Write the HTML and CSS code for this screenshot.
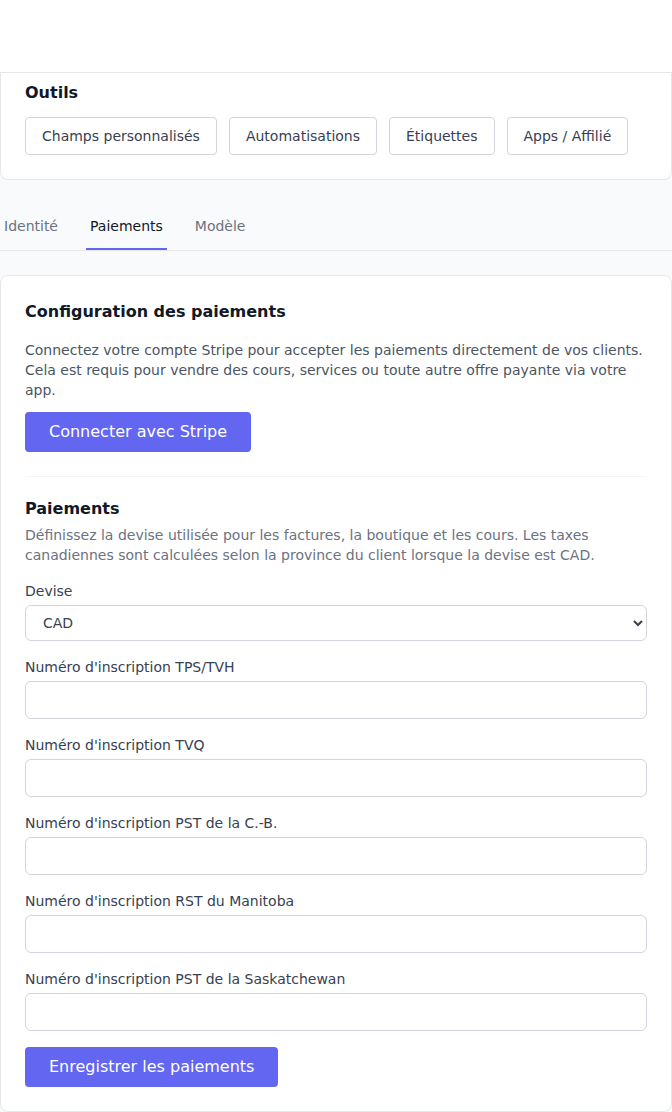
FILE: index.html
```html
<!DOCTYPE html>
<html lang="fr">
<head>
<meta charset="utf-8">
<title>Paiements</title>
<link rel="stylesheet" href="styles.css">
</head>
<body>
<header class="topbar"></header>
<main class="page">
  <section class="card card-tools">
    <h2 class="card-title">Outils</h2>
    <div class="tool-row">
      <button class="btn-outline">Champs personnalisés</button>
      <button class="btn-outline">Automatisations</button>
      <button class="btn-outline">Étiquettes</button>
      <button class="btn-outline">Apps / Affilié</button>
    </div>
  </section>

  <nav class="tabs">
    <a class="tab">Identité</a>
    <a class="tab tab-active">Paiements</a>
    <a class="tab">Modèle</a>
  </nav>

  <section class="card card-main">
    <h2 class="card-title">Configuration des paiements</h2>
    <p class="intro">Connectez votre compte Stripe pour accepter les paiements directement de vos clients. Cela est requis pour vendre des cours, services ou toute autre offre payante via votre app.</p>
    <button class="btn-primary btn-stripe">Connecter avec Stripe</button>

    <div class="section">
      <h3 class="section-title">Paiements</h3>
      <p class="desc">Définissez la devise utilisée pour les factures, la boutique et les cours. Les taxes canadiennes sont calculées selon la province du client lorsque la devise est CAD.</p>

      <div class="fields">
        <label class="field">
          <span class="label">Devise</span>
          <select class="select">
            <option>CAD</option>
            <option>USD</option>
            <option>EUR</option>
          </select>
        </label>
        <label class="field">
          <span class="label">Numéro d'inscription TPS/TVH</span>
          <input class="input" type="text">
        </label>
        <label class="field">
          <span class="label">Numéro d'inscription TVQ</span>
          <input class="input" type="text">
        </label>
        <label class="field">
          <span class="label">Numéro d'inscription PST de la C.-B.</span>
          <input class="input" type="text">
        </label>
        <label class="field">
          <span class="label">Numéro d'inscription RST du Manitoba</span>
          <input class="input" type="text">
        </label>
        <label class="field">
          <span class="label">Numéro d'inscription PST de la Saskatchewan</span>
          <input class="input" type="text">
        </label>
      </div>

      <button class="btn-primary btn-save">Enregistrer les paiements</button>
    </div>
  </section>
</main>
</body>
</html>
```
FILE: styles.css
```css
* {
  box-sizing: border-box;
}

html, body {
  margin: 0;
  padding: 0;
}

body {
  background: #f9fafb;
  font-family: "DejaVu Sans", sans-serif;
  color: #111827;
  font-size: 14px;
  line-height: 20px;
}

.topbar {
  height: 73px;
  background: #ffffff;
  border-bottom: 1px solid #e5e7eb;
}

.page {
  display: flex;
  flex-direction: column;
}

.card {
  background: #ffffff;
  border: 1px solid #e5e7eb;
  border-radius: 8px;
}

.card-tools {
  border-top: none;
  border-radius: 0 0 8px 8px;
  padding: 8px 24px 24px;
}

.card-title {
  margin: 0;
  font-size: 16px;
  line-height: 24px;
  font-weight: 700;
  color: #111827;
}

.card-tools .card-title {
  margin-bottom: 12px;
}

.tool-row {
  display: flex;
  gap: 12px;
}

.btn-outline {
  font-family: inherit;
  font-size: 14px;
  line-height: 20px;
  padding: 8px 16px;
  background: #ffffff;
  color: #374151;
  border: 1px solid #d1d5db;
  border-radius: 4px;
  cursor: pointer;
}

.tabs {
  display: flex;
  gap: 24px;
  margin-top: 24px;
  border-bottom: 1px solid #e5e7eb;
}

.tab {
  padding: 12px 4px;
  border-bottom: 2px solid transparent;
  color: #6b7280;
  font-size: 14px;
  line-height: 20px;
  cursor: pointer;
}

.tab-active {
  color: #111827;
  border-bottom-color: #6366f1;
}

.card-main {
  margin-top: 24px;
  padding: 24px;
}

.intro {
  margin: 16px 0 0;
  color: #4b5563;
}

.btn-primary {
  font-family: inherit;
  font-size: 16px;
  line-height: 24px;
  padding: 8px 24px;
  background: #6366f1;
  color: #ffffff;
  border: none;
  border-radius: 4px;
  cursor: pointer;
}

.btn-stripe {
  margin-top: 12px;
  align-self: flex-start;
}

.section {
  margin-top: 24px;
  padding-top: 20px;
  border-top: 1px solid #f3f4f6;
}

.section-title {
  margin: 0;
  font-size: 16px;
  line-height: 24px;
  font-weight: 700;
  color: #111827;
}

.desc {
  margin: 4px 0 0;
  color: #6b7280;
}

.fields {
  margin-top: 16px;
  display: flex;
  flex-direction: column;
  gap: 16px;
}

.field {
  display: flex;
  flex-direction: column;
  gap: 4px;
}

.label {
  color: #374151;
  font-size: 14px;
  line-height: 20px;
}

.select {
  height: 36px;
  width: 100%;
  padding: 0 10px 0 13px;
  font-family: inherit;
  font-size: 14px;
  color: #374151;
  background: #ffffff;
  border: 1px solid #d1d5db;
  border-radius: 6px;
}

.input {
  height: 38px;
  width: 100%;
  padding: 0 12px;
  font-family: inherit;
  font-size: 14px;
  color: #111827;
  background: #ffffff;
  border: 1px solid #d1d5db;
  border-radius: 6px;
}

.btn-save {
  margin-top: 16px;
}
```
